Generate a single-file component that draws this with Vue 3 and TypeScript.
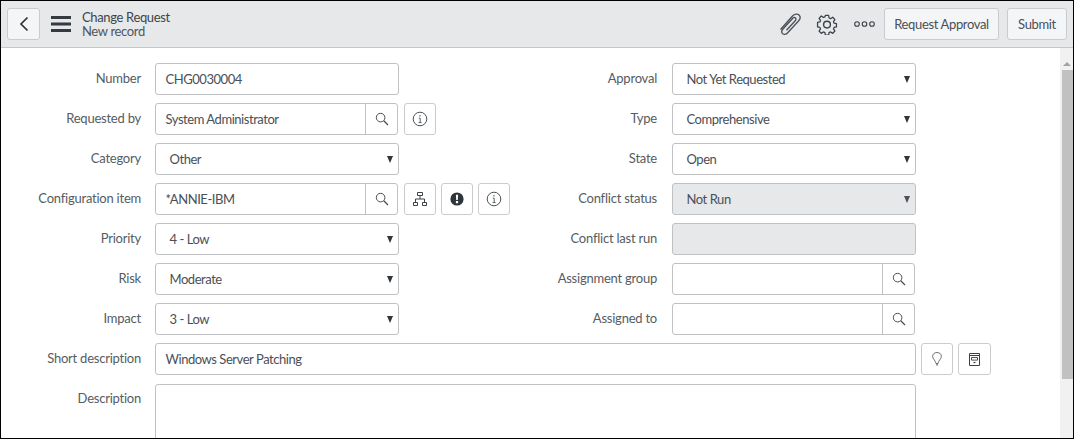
<script setup lang="ts">
const leftRows = [
  { label: 'Number', kind: 'input', value: 'CHG0030004', tools: [] as string[] },
  { label: 'Requested by', kind: 'lookup', value: 'System Administrator', tools: ['info'] },
  { label: 'Category', kind: 'select', value: 'Other', tools: [] },
  { label: 'Configuration item', kind: 'lookup', value: '*ANNIE-IBM', tools: ['tree', 'alert', 'info'] },
  { label: 'Priority', kind: 'select', value: '4 - Low', tools: [] },
  { label: 'Risk', kind: 'select', value: 'Moderate', tools: [] },
  { label: 'Impact', kind: 'select', value: '3 - Low', tools: [] },
]
const rightRows = [
  { label: 'Approval', kind: 'select', value: 'Not Yet Requested' },
  { label: 'Type', kind: 'select', value: 'Comprehensive' },
  { label: 'State', kind: 'select', value: 'Open' },
  { label: 'Conflict status', kind: 'disabled-select', value: 'Not Run' },
  { label: 'Conflict last run', kind: 'disabled', value: '' },
  { label: 'Assignment group', kind: 'lookup', value: '' },
  { label: 'Assigned to', kind: 'lookup', value: '' },
]
const columns = [leftRows, rightRows.map((r) => ({ ...r, tools: [] as string[] }))]
</script>

<template>
  <div class="frame">
    <header class="bar">
      <div class="bar-left">
        <button class="btn back" aria-label="Back">
          <svg width="12" height="18" viewBox="0 0 12 18"><path d="M9.5 2.5 L3 9 L9.5 15.5" fill="none" stroke="#2e3338" stroke-width="1.7" /></svg>
        </button>
        <svg class="burger" width="20" height="16" viewBox="0 0 20 16"><path d="M0 0h20v3H0zM0 6.5h20v3H0zM0 13h20v3H0z" fill="#343a40" /></svg>
        <div class="titles">
          <div class="t1">Change Request</div>
          <div class="t2">New record</div>
        </div>
      </div>
      <div class="bar-right">
        <svg class="clip" width="24" height="24" viewBox="0 0 24 24" fill="none" stroke="#4b5157" stroke-width="1.3">
          <path d="M2.5 17.5 L14.5 4 C16.5 1.8 19.5 1.6 21 3 C22.6 4.6 22.3 7 20.5 9 L9.5 21 C8 22.6 5.8 22.8 4.6 21.6 C3.4 20.4 3.6 18.5 5 17 L14.8 6.2 C15.6 5.4 16.8 5.3 17.5 6 C18.2 6.7 18 7.8 17.2 8.7 L8.5 18.2" />
        </svg>
        <svg class="gear" width="22" height="22" viewBox="0 0 22 22" fill="none" stroke="#3c4248" stroke-width="1.4" stroke-linejoin="round">
          <path d="M9.2 1.5h3.6l.5 2.8 1.7.8 2.4-1.6 2.4 2.6-1.6 2.3.7 1.7 2.6.6v3.5l-2.6.6-.7 1.7 1.6 2.3-2.4 2.6-2.4-1.6-1.7.7-.5 2.8H9.2l-.5-2.8-1.7-.7-2.4 1.6-2.4-2.6 1.6-2.3-.7-1.7-2.6-.6V9.3l2.6-.6.7-1.7-1.6-2.3 2.4-2.6L7 3.7l1.7-.7z" transform="translate(1.1 1.1) scale(.9)" />
          <circle cx="11" cy="11.6" r="3.4" />
        </svg>
        <svg class="dots" width="21" height="6" viewBox="0 0 21 6" fill="none" stroke="#3c4248" stroke-width="1.1">
          <circle cx="3" cy="3" r="2.3" /><circle cx="10.5" cy="3" r="2.3" /><circle cx="18" cy="3" r="2.3" />
        </svg>
        <button class="btn act approve">Request Approval</button>
        <button class="btn act submit">Submit</button>
      </div>
    </header>

    <div class="body">
      <main class="form">
        <div class="cols">
          <div v-for="(col, ci) in columns" :key="ci" class="col" :class="ci ? 'col-r' : 'col-l'">
            <div v-for="row in col" :key="row.label" class="row">
              <label class="lab">{{ row.label }}</label>
              <div class="ctrl">
                <div v-if="row.kind === 'input'" class="box text">{{ row.value }}</div>
                <div v-else-if="row.kind === 'lookup'" class="box lookup">
                  <span class="lk-text">{{ row.value }}</span>
                  <span class="lk-btn">
                    <svg width="14" height="14" viewBox="0 0 14 14" fill="none" stroke="#4b5157"><circle cx="5.6" cy="5.6" r="4.3" stroke-width="1" /><path d="M8.8 8.8 13 13" stroke-width="1.3" /></svg>
                  </span>
                </div>
                <div v-else-if="row.kind === 'select'" class="box sel">{{ row.value }}</div>
                <div v-else-if="row.kind === 'disabled-select'" class="box sel off">{{ row.value }}</div>
                <div v-else class="box off"></div>
                <button v-for="t in row.tools" :key="t" class="btn tool">
                  <svg v-if="t === 'info'" width="16" height="16" viewBox="0 0 16 16" fill="none" stroke="#4b5157">
                    <circle cx="8" cy="8" r="6.8" stroke-width="1" /><path d="M6.8 7.2H8.2V11.6M6.6 11.6H9.6" stroke-width=".9" /><path d="M7.4 4.2h1.2v1.4H7.4z" fill="#4b5157" stroke="none" />
                  </svg>
                  <svg v-else-if="t === 'tree'" width="14" height="14" viewBox="0 0 14 14" fill="none" stroke="#3c4248" stroke-width="1">
                    <path d="M4.5 .5h5v3h-5zM.5 10.5h4v3h-4zM9.5 10.5h4v3h-4zM7 3.5v3.5M2.5 10.5V7h9v3.5" />
                  </svg>
                  <svg v-else width="14" height="14" viewBox="0 0 14 14">
                    <circle cx="7" cy="7" r="6.6" fill="#2f353b" /><path d="M5.9 2.8h2.2L7.8 8H6.2zM5.9 9.1h2.2v2.1H5.9z" fill="#fff" />
                  </svg>
                </button>
              </div>
            </div>
          </div>
        </div>

        <div class="row">
          <label class="lab">Short description</label>
          <div class="ctrl">
            <div class="box text wide">Windows Server Patching</div>
            <button class="btn tool">
              <svg width="10" height="14" viewBox="0 0 10 14" fill="none" stroke="#5d6369">
                <path d="M4 11.5 C3.6 8.5 .6 7 .6 4.3 C.6 2.1 2.5 .5 5 .5 C7.5 .5 9.4 2.1 9.4 4.3 C9.4 7 6.4 8.5 6 11.5 Z" stroke-width=".9" /><path d="M4.3 12.8h1.4" stroke-width="1.4" />
              </svg>
            </button>
            <button class="btn tool tool-last">
              <svg width="11" height="13" viewBox="0 0 11 13" fill="none" stroke="#3c4248">
                <path d="M.5 .5h10v12H.5zM.5 2.5h10" stroke-width="1" /><path d="M2.5 4.5h6v2.6h-6z" stroke-width=".9" /><path d="M4.5 9.5h2" stroke-width="1.2" />
              </svg>
            </button>
          </div>
        </div>

        <div class="row desc-row">
          <label class="lab">Description</label>
          <div class="box area"></div>
        </div>
      </main>

      <aside class="scroll">
        <span class="arrow"></span>
        <span class="thumb"></span>
      </aside>
    </div>
  </div>
</template>

<style>
html, body { margin: 0; overflow: hidden; background: #fff; }
</style>

<style scoped>
.frame {
  width: 1074px;
  height: 439px;
  box-sizing: border-box;
  border: 1px solid #000;
  display: flex;
  flex-direction: column;
  overflow: hidden;
  font-family: Lato, "Open Sans", sans-serif;
  font-size: 13px;
  letter-spacing: -0.35px;
  color: #4a5056;
  background: #fff;
}
.bar {
  height: 47px;
  flex: none;
  box-sizing: border-box;
  background: #e6e8ea;
  border-bottom: 1px solid #c4c6c8;
  display: flex;
  justify-content: space-between;
  align-items: center;
  padding: 0 6px;
}
.bar-left, .bar-right { display: flex; align-items: center; }
.btn {
  box-sizing: border-box;
  font: inherit;
  letter-spacing: inherit;
  color: #4a5056;
  background: #f4f5f6;
  border: 1px solid #c9cbcd;
  border-radius: 3px;
  padding: 0;
  display: flex;
  align-items: center;
  justify-content: center;
}
.back { width: 33px; height: 32px; }
.burger { margin-left: 11px; }
.titles { margin-left: 11px; line-height: 14px; }
.t1 { color: #3f454b; }
.t2 { color: #50565c; }
.clip { margin-right: 14px; }
.gear { margin-right: 16px; }
.dots { margin-right: 9px; }
.act { height: 32px; }
.approve { width: 115px; margin-right: 8px; }
.submit { width: 60px; }
.body { flex: 1; display: flex; min-height: 0; }
.form { flex: 1; padding-top: 15px; min-width: 0; }
.cols { display: flex; }
.col-l { width: 517px; }
.row { display: flex; height: 32px; margin-bottom: 8px; }
.lab { width: 140px; margin-right: 14px; text-align: right; line-height: 30px; flex: none; color: #565c62; letter-spacing: -0.23px; }
.col-r .lab { width: 139px; margin-right: 15px; }
.ctrl { display: flex; align-items: stretch; }
.box {
  box-sizing: border-box;
  width: 244px;
  height: 32px;
  border: 1px solid #bfc1c3;
  border-radius: 3px;
  background: #fff;
  color: #4a5056;
  line-height: 31px;
  letter-spacing: -0.45px;
}
.text { padding-left: 9.5px; }
.lookup { width: 243px; display: flex; }
.lk-text { flex: 1; padding-left: 9.5px; }
.lk-btn { box-sizing: border-box; width: 32px; border-left: 1px solid #bfc1c3; display: flex; align-items: center; justify-content: center; }
.sel { padding-left: 13.5px; position: relative; }
.sel::after {
  content: "";
  position: absolute;
  right: 5px;
  top: 12px;
  border-left: 3.5px solid transparent;
  border-right: 3.5px solid transparent;
  border-top: 7px solid #2f353b;
}
.off { background: #e6e8ea; }
.off.sel::after { border-top-color: #4b5157; }
.tool { width: 32px; height: 32px; background: #fff; margin-left: 5px; }
.ctrl .box + .tool { margin-left: 6px; }
.wide { width: 761px; }
.ctrl .wide + .tool { margin-left: 5px; }
.tool-last { width: 33px; }
.desc-row { height: auto; margin-top: 9px; margin-bottom: 0; }
.desc-row .lab { line-height: 28px; }
.area { width: 761px; height: 80px; flex: none; }
.scroll { width: 13px; flex: none; background: #f1f1f1; position: relative; }
.arrow {
  position: absolute;
  left: 3px;
  top: 14px;
  border-left: 4px solid transparent;
  border-right: 4px solid transparent;
  border-bottom: 4px solid #a3a3a3;
}
.thumb { position: absolute; left: 2px; right: 0; top: 22px; height: 309px; background: #c1c1c1; }
</style>
